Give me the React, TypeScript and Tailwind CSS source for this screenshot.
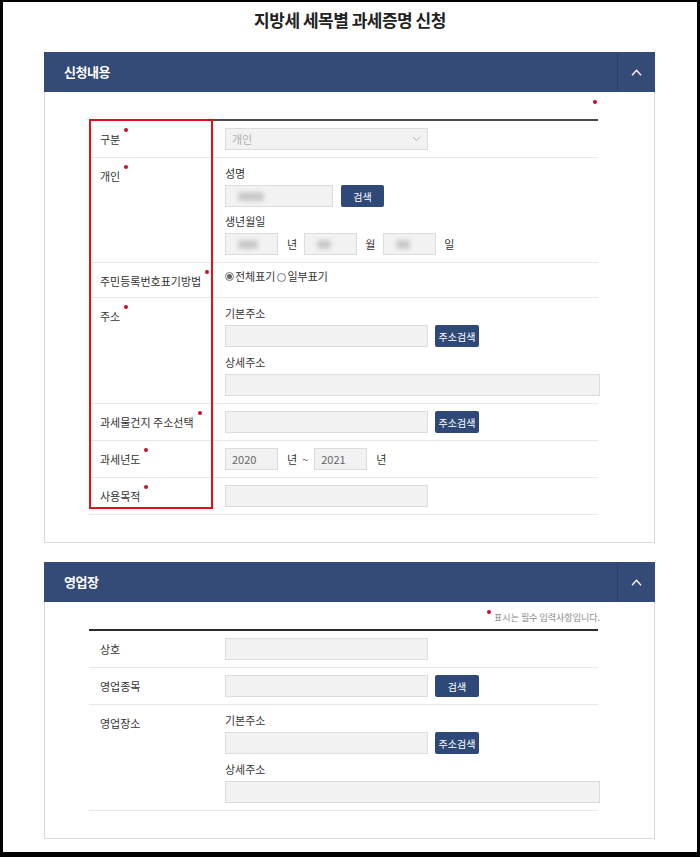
import React from "react";

const Dot = ({ className = "" }: { className?: string }) => (
  <span
    className={`block w-[4px] h-[4px] rounded-full bg-[#c8102e] shrink-0 ${className}`}
  />
);

const Label = ({ text, req = false }: { text: string; req?: boolean }) => (
  <div className="w-[124px] shrink-0 pl-[11px] pt-[10px] text-[11px] leading-4 text-[#333]">
    <span className="inline-flex items-start">
      <span>{text}</span>
      {req && <Dot className="ml-[4px] -mt-[3px]" />}
    </span>
  </div>
);

const Row = ({
  label,
  req,
  children,
}: {
  label: string;
  req?: boolean;
  children: React.ReactNode;
}) => (
  <div className="flex border-b border-[#e8e8e8]">
    <Label text={label} req={req} />
    <div className="flex-1 pl-[12px] py-[7px]">{children}</div>
  </div>
);

const Input = ({
  w = "w-[203px]",
  children,
}: {
  w?: string;
  children?: React.ReactNode;
}) => (
  <div
    className={`${w} h-[22px] bg-[#f2f2f2] border border-[#dcdcdc] flex items-center pl-[6px] text-[11px] text-[#666] shrink-0`}
  >
    {children}
  </div>
);

const Blur = ({ w }: { w: string }) => (
  <div className={`${w} h-[9px] ml-[6px] rounded-sm bg-[#c9c9c9] blur-[2px]`} />
);

const Btn = ({ text, w = "w-[44px]" }: { text: string; w?: string }) => (
  <div
    className={`${w} h-[22px] rounded-[2px] bg-[#2e4877] text-white text-[10px] flex items-center justify-center shrink-0`}
  >
    {text}
  </div>
);

const Sub = ({ text }: { text: string }) => (
  <div className="text-[11px] leading-4 text-[#333]">{text}</div>
);

const Header = ({ title }: { title: string }) => (
  <div className="h-[40px] bg-[#344a77] flex items-center justify-between">
    <span className="pl-[20px] text-white text-[13px] font-bold tracking-[-0.5px]">
      {title}
    </span>
    <div className="h-full w-[38px] border-l border-[#2c3f66] flex items-center justify-center">
      <svg width="11" height="7" viewBox="0 0 11 7">
        <polyline
          points="1,6.2 5.5,1.2 10,6.2"
          fill="none"
          stroke="#fff"
          strokeWidth="1.3"
        />
      </svg>
    </div>
  </div>
);

export default function App() {
  return (
    <div className="w-[700px] h-[857px] box-border border-[3px] border-t-[2px] border-b-[5px] border-black bg-white overflow-hidden font-['Noto_Sans_CJK_KR','Noto_Sans',sans-serif]">
      <div className="pt-[6px] text-center text-[17px] leading-6 font-bold text-[#222] tracking-[-0.5px]">
        지방세 세목별 과세증명 신청
      </div>

      {/* Panel 1 */}
      <div className="ml-[41px] w-[611px] mt-[20px]">
        <Header title="신청내용" />
        <div className="border border-t-0 border-[#d8d8d8] pl-[44px] pr-[56px] pt-[8px] pb-[27px]">
          <div className="h-[19px] flex justify-end pr-[1px]">
            <Dot />
          </div>
          <div className="relative">
            <div className="h-[2px] bg-[#4a4a4a]" />
            <Row label="구분" req>
              <div className="w-[203px] h-[22px] bg-[#f2f2f2] border border-[#dcdcdc] flex items-center justify-between px-[6px] text-[11px] text-[#b0b0b0]">
                개인
                <svg width="9" height="6" viewBox="0 0 9 6">
                  <polyline
                    points="1,1 4.5,4.5 8,1"
                    fill="none"
                    stroke="#b8b8b8"
                    strokeWidth="1"
                  />
                </svg>
              </div>
            </Row>
            <Row label="개인" req>
              <div className="flex flex-col">
                <Sub text="성명" />
                <div className="flex items-center gap-[8px] mt-[4px]">
                  <Input w="w-[108px]">
                    <Blur w="w-[26px]" />
                  </Input>
                  <Btn text="검색" w="w-[43px]" />
                </div>
                <div className="mt-[6px]">
                  <Sub text="생년월일" />
                </div>
                <div className="flex items-center mt-[4px] text-[11px] text-[#333]">
                  <Input w="w-[53px]">
                    <Blur w="w-[20px]" />
                  </Input>
                  <span className="ml-[9px] mr-[7px]">년</span>
                  <Input w="w-[53px]">
                    <Blur w="w-[14px]" />
                  </Input>
                  <span className="ml-[8px] mr-[8px]">월</span>
                  <Input w="w-[53px]">
                    <Blur w="w-[14px]" />
                  </Input>
                  <span className="ml-[8px]">일</span>
                </div>
              </div>
            </Row>
            <Row label="주민등록번호표기방법" req>
              <div className="h-[22px] flex items-start text-[11px] leading-4 text-[#333] -mt-[2px]">
                <span className="inline-flex items-center">
                  <span className="w-[9px] h-[9px] rounded-full border border-[#777] flex items-center justify-center mr-[1px]">
                    <span className="w-[5px] h-[5px] rounded-full bg-[#666]" />
                  </span>
                  전체표기
                </span>
                <span className="inline-flex items-center ml-[2px]">
                  <span className="w-[9px] h-[9px] rounded-full border border-[#777] mr-[1px] mt-[3px]" />
                  일부표기
                </span>
              </div>
            </Row>
            <Row label="주소" req>
              <div className="flex flex-col">
                <Sub text="기본주소" />
                <div className="flex items-center gap-[7px] mt-[4px]">
                  <Input />
                  <Btn text="주소검색" />
                </div>
                <div className="mt-[7px]">
                  <Sub text="상세주소" />
                </div>
                <div className="mt-[4px]">
                  <Input w="w-[375px]" />
                </div>
              </div>
            </Row>
            <Row label="과세물건지 주소선택" req>
              <div className="flex items-center gap-[7px]">
                <Input />
                <Btn text="주소검색" />
              </div>
            </Row>
            <Row label="과세년도" req>
              <div className="flex items-center text-[11px] text-[#333]">
                <Input w="w-[53px]">2020</Input>
                <span className="ml-[9px]">년</span>
                <span className="ml-[5px] mr-[6px] text-[#666]">~</span>
                <Input w="w-[53px]">2021</Input>
                <span className="ml-[9px]">년</span>
              </div>
            </Row>
            <Row label="사용목적" req>
              <Input />
            </Row>
            <div className="absolute left-0 top-0 w-[124px] h-[390px] border-2 border-[#e3101c] pointer-events-none" />
          </div>
        </div>
      </div>

      {/* Panel 2 */}
      <div className="ml-[41px] w-[611px] mt-[19px]">
        <Header title="영업장" />
        <div className="border border-t-0 border-[#d8d8d8] pl-[44px] pr-[56px] pt-[8px] pb-[27px]">
          <div className="h-[19px] flex justify-end items-start">
            <span className="inline-flex items-start text-[9px] leading-[14px] text-[#8a8a8a] -mr-[2px] pt-[1px]">
              <Dot className="-mt-[1px] mr-[3px]" />
              표시는 필수 입력사항입니다.
            </span>
          </div>
          <div className="h-[2px] bg-[#2a2a33]" />
          <Row label="상호">
            <Input />
          </Row>
          <Row label="영업종목">
            <div className="flex items-center gap-[7px]">
              <Input />
              <Btn text="검색" />
            </div>
          </Row>
          <Row label="영업장소">
            <div className="flex flex-col">
              <Sub text="기본주소" />
              <div className="flex items-center gap-[7px] mt-[4px]">
                <Input />
                <Btn text="주소검색" />
              </div>
              <div className="mt-[7px]">
                <Sub text="상세주소" />
              </div>
              <div className="mt-[4px]">
                <Input w="w-[375px]" />
              </div>
            </div>
          </Row>
        </div>
      </div>
    </div>
  );
}
